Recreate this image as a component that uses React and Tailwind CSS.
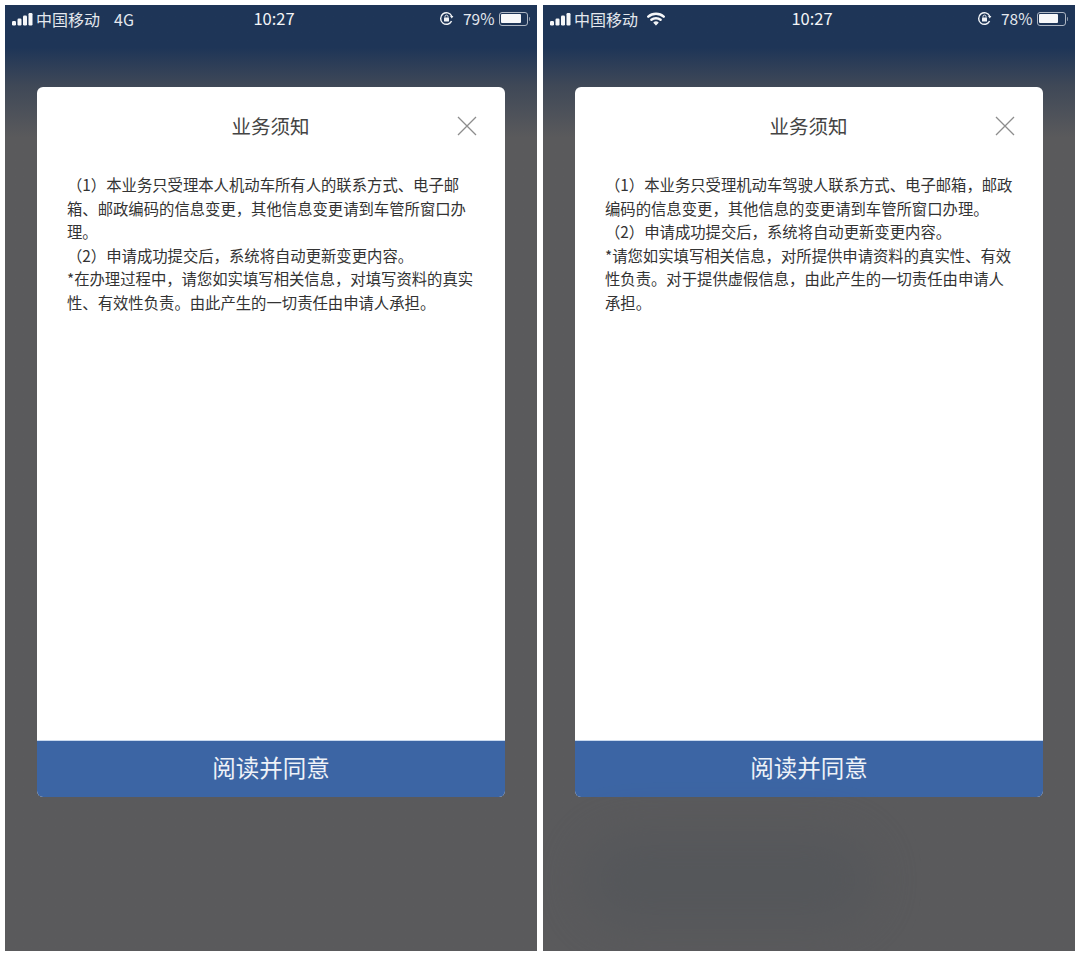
import React from 'react';

function Signal() {
  return (
    <svg width="21" height="14" viewBox="0 0 21 14" className="shrink-0">
      <rect x="0" y="9" width="4" height="4.5" rx="1.2" fill="#f6f7f9" />
      <rect x="5.5" y="6.5" width="4" height="7" rx="1.2" fill="#f6f7f9" />
      <rect x="11" y="3.5" width="4" height="10" rx="1.2" fill="#f6f7f9" />
      <rect x="16.5" y="1" width="4" height="12.5" rx="1.2" fill="#f6f7f9" />
    </svg>
  );
}

function Wifi() {
  return (
    <svg width="18" height="14" viewBox="0 0 18 14" className="shrink-0" fill="none" stroke="#f6f7f9" strokeLinecap="round">
      <path d="M1.3 4.6 C5.5 0.8 12.5 0.8 16.7 4.6" strokeWidth="2.5" />
      <path d="M4.4 7.8 C7 5.6 11 5.6 13.6 7.8" strokeWidth="2.5" />
      <path d="M7.1 10.5 C8.2 9.7 9.8 9.7 10.9 10.5 L9 12.7 Z" fill="#f6f7f9" strokeWidth="1.3" strokeLinejoin="round" />
    </svg>
  );
}

function RotationLock() {
  return (
    <svg width="15" height="15" viewBox="0 0 15 15" className="shrink-0" fill="none">
      <path d="M12.6 10.2 A5.8 5.8 0 1 1 12.7 5" stroke="#f1f3f6" strokeWidth="1.4" />
      <path d="M11 4.9 L14.4 4.9 L12.8 7.4 Z" fill="#f1f3f6" />
      <rect x="5" y="6.6" width="5" height="4" rx="0.6" fill="#f1f3f6" />
      <path d="M6 6.6 V5.6 A1.5 1.5 0 0 1 9 5.6 V6.6" stroke="#f1f3f6" strokeWidth="0.9" />
    </svg>
  );
}

function Battery({ level }) {
  return (
    <div className="flex items-center shrink-0">
      <div className="w-[29px] h-[14px] rounded-[3px] border border-[#aeb7c4] p-[1.5px]">
        <div className="h-full rounded-[1px] bg-[#f7f8fa]" style={{ width: `${level}%` }} />
      </div>
      <div className="w-[1.5px] h-[4px] ml-[1px] rounded-r-sm bg-[#8d98a8]" />
    </div>
  );
}

function StatusBar({ network, battery }) {
  return (
    <div className="relative flex items-center justify-between h-[27px] pl-[7px] pr-[7px] text-[16px] text-[#e4e8ee]">
      <div className="flex items-center gap-[3px]">
        <Signal />
        <span>中国移动</span>
        {network === 'wifi' ? (
          <span className="ml-[6px]"><Wifi /></span>
        ) : (
          <span className="ml-[11px]">4G</span>
        )}
      </div>
      <div className="absolute left-0 right-0 pl-[6px] text-center text-[16.5px] text-[#f4f5f8]">10:27</div>
      <div className="flex items-center">
        <RotationLock />
        <span className="ml-[9px] mr-[4px] text-[15.5px]">{battery}%</span>
        <Battery level={battery === 79 ? 84 : 80} />
      </div>
    </div>
  );
}

function Phone({ network, battery, lines, smudge }) {
  return (
    <div className="relative w-[532px] h-[946px] flex flex-col overflow-hidden bg-gradient-to-b from-[#1e3557] from-[4.5%] via-[#3f4857] via-[8.5%] to-[#5a5a5c] to-[14%]">
      <StatusBar network={network} battery={battery} />
      {smudge && <div className="absolute left-[40px] top-[830px] w-[290px] h-[90px] rounded-full bg-[#505459] opacity-50 blur-xl" />}
      <div className="w-[468px] h-[710px] mt-[55px] ml-[32px] flex flex-col rounded-md overflow-hidden bg-white">
        <div className="relative flex items-center justify-center h-[78px] shrink-0 text-[19.5px] text-[#444444]">
          <span className="mr-[1px]">业务须知</span>
          <svg width="20" height="20" viewBox="0 0 20 20" className="absolute right-[28px] top-[29px]" stroke="#8d8d8d" strokeWidth="1.3" fill="none">
            <path d="M1 1 L19 19 M19 1 L1 19" />
          </svg>
        </div>
        <div className="flex-1 pt-[8px] pl-[30px] text-[15.35px] leading-[23.5px] text-[#333333]">
          {lines.map((line, i) => (
            <div key={i} className="whitespace-nowrap">{line}</div>
          ))}
        </div>
        <div className="flex items-center justify-center h-[57px] pb-[3px] shrink-0 bg-[#3c65a4] text-[23.5px] text-[#eef2f8] border-t border-[#c9d9ee]">
          阅读并同意
        </div>
      </div>
    </div>
  );
}

const LEFT = [
  '（1）本业务只受理本人机动车所有人的联系方式、电子邮',
  '箱、邮政编码的信息变更，其他信息变更请到车管所窗口办',
  '理。',
  '（2）申请成功提交后，系统将自动更新变更内容。',
  '*在办理过程中，请您如实填写相关信息，对填写资料的真实',
  '性、有效性负责。由此产生的一切责任由申请人承担。',
];

const RIGHT = [
  '（1）本业务只受理机动车驾驶人联系方式、电子邮箱，邮政',
  '编码的信息变更，其他信息的变更请到车管所窗口办理。',
  '（2）申请成功提交后，系统将自动更新变更内容。',
  '*请您如实填写相关信息，对所提供申请资料的真实性、有效',
  '性负责。对于提供虚假信息，由此产生的一切责任由申请人',
  '承担。',
];

export default function App() {
  return (
    <div className="w-[1080px] h-[956px] overflow-hidden bg-white flex gap-[6px] p-[5px] font-['Noto_Sans_CJK_SC','Noto_Sans',sans-serif]">
      <Phone network="4g" battery={79} lines={LEFT} />
      <Phone network="wifi" battery={78} lines={RIGHT} smudge />
    </div>
  );
}
